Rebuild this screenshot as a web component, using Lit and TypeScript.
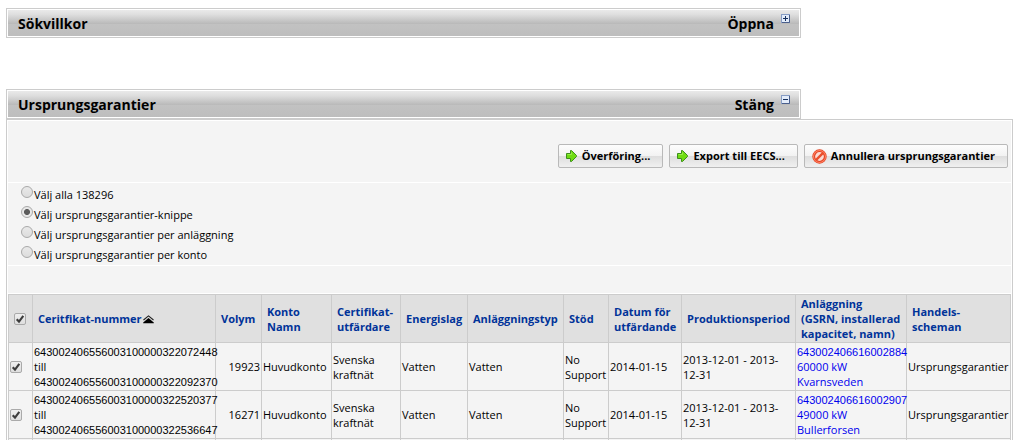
import { LitElement, html, css, svg, nothing } from "lit";
import { customElement, property } from "lit/decorators.js";

interface Guarantee {
  from: string;
  to: string;
  volume: number;
  gsrn: string;
  capacity: string;
  plant: string;
}

const guarantees: Guarantee[] = [
  {
    from: "643002406556003100000322072448",
    to: "643002406556003100000322092370",
    volume: 19923,
    gsrn: "643002406616002884",
    capacity: "60000 kW",
    plant: "Kvarnsveden",
  },
  {
    from: "643002406556003100000322520377",
    to: "643002406556003100000322536647",
    volume: 16271,
    gsrn: "643002406616002907",
    capacity: "49000 kW",
    plant: "Bullerforsen",
  },
];

const choices = [
  "Välj alla 138296",
  "Välj ursprungsgarantier-knippe",
  "Välj ursprungsgarantier per anläggning",
  "Välj ursprungsgarantier per konto",
];

const columns = [24, 183, 46, 70, 69, 67, 96, 45, 73, 114, 111, 104];

const arrowIcon = html`<svg width="12" height="14" viewBox="0 0 12 14" aria-hidden="true">
  <path d="M0.5 4.5H4.5V1.5H5.5L10.5 6.5V7.5L5.5 12.5H4.5V9.5H0.5Z" fill="#6fdc12" stroke="#3d8f1c" stroke-linejoin="round" />
  <path d="M1.5 5.5H5.5V3.5" fill="none" stroke="#98ee48" />
</svg>`;

const stopIcon = html`<svg width="15" height="15" viewBox="0 0 14 14" aria-hidden="true">
  <circle cx="7" cy="7" r="5.4" fill="#fbd9d2" stroke="#e2401f" stroke-width="2.6" />
  <circle cx="7" cy="7" r="5.6" fill="none" stroke="#ff8264" stroke-width="1" />
  <path d="M3.4 10.6L10.6 3.4" stroke="#ea4e2c" stroke-width="2.2" />
</svg>`;

const sortIcon = html`<svg class="sort" width="11" height="9" viewBox="0 0 11 9" aria-hidden="true">
  <path d="M0.5 5L5.5 0.9L10.5 5" fill="none" stroke="#222" stroke-width="1.1" />
  <path d="M5.5 3L10.8 7.4V8.2H0.2V7.4Z" fill="#000" />
</svg>`;

@customElement("section-bar")
export class SectionBar extends LitElement {
  static styles = css`
    :host {
      display: block;
      max-width: 795px;
    }
    .bar {
      box-sizing: border-box;
      display: flex;
      align-items: center;
      justify-content: space-between;
      height: 30px;
      padding: 2px 10px 0 11px;
      border: 1px solid #ccc;
      box-shadow: inset 0 0 0 1px #fff;
      background: linear-gradient(#ececec 0, #dedede 20%, #b9b9b9 53%, #c2c2c2 54%, #bdbdbd 100%);
    }
    .title,
    .toggle {
      margin: 0;
      font: bold 14px/20px "Open Sans", "Noto Sans", sans-serif;
      color: #000;
    }
    .toggle {
      display: flex;
      align-items: flex-start;
      gap: 7px;
      padding: 0;
      border: 0;
      background: none;
      cursor: pointer;
    }
  `;

  @property() heading = "";
  @property() action = "";
  @property({ type: Boolean }) open = false;

  render() {
    return html`<div class="bar">
      <h2 class="title">${this.heading}</h2>
      <button class="toggle" type="button" aria-expanded=${this.open}>
        ${this.action}
        <svg width="9" height="9" viewBox="0 0 9 9" aria-hidden="true">
          <rect x="0.5" y="0.5" width="8" height="8" fill="#e3ecfa" stroke="#869cc4" />
          <path d="M1 8.5H8.5V1" fill="none" stroke="#4a5f8c" />
          <path d="M2 4.5H7" stroke="#16305e" />
          ${this.open ? nothing : svg`<path d="M4.5 2V7" stroke="#16305e" />`}
        </svg>
      </button>
    </div>`;
  }
}

@customElement("app-root")
export class AppRoot extends LitElement {
  static styles = css`
    :host {
      box-sizing: border-box;
      display: block;
      height: 100vh;
      overflow: hidden;
      padding: 8px 4px 0 6px;
      background: #fff;
      color: #000;
      font: 11px/15px "Open Sans", "Noto Sans", sans-serif;
    }
    .results {
      margin-top: 51px;
    }
    .panel {
      display: flex;
      flex-direction: column;
      gap: 1px;
      padding: 1px;
      border: 1px solid #ccc;
      background: #fff;
    }
    .band {
      box-sizing: border-box;
      background: #f4f4f4;
    }
    .actions {
      display: flex;
      flex-wrap: wrap;
      justify-content: flex-end;
      gap: 6px;
      padding: 23px 3px 14px;
    }
    .action {
      display: flex;
      align-items: center;
      gap: 4px;
      height: 24px;
      padding: 0 12px 0 7px;
      border: 1px solid #b9b9b9;
      border-radius: 2px;
      background: linear-gradient(#fdfdfd 0, #f2f2f2 50%, #dedede 52%, #f0f0f0 100%);
      font: bold 11px/16px "Open Sans", "Noto Sans", sans-serif;
      color: #000;
      cursor: pointer;
    }
    .choices {
      margin: 0;
      padding: 2px 0 0 13px;
      border: 0;
      height: 82px;
    }
    .choice {
      display: flex;
      align-items: flex-start;
      gap: 1px;
      height: 20px;
      line-height: 20px;
      width: max-content;
    }
    .radio {
      appearance: none;
      box-sizing: border-box;
      width: 12px;
      height: 12px;
      margin: 1px 0 0;
      border: 1px solid #a9a9a9;
      border-radius: 50%;
      background: linear-gradient(#e9e9e9, #dcdcdc);
    }
    .radio:checked {
      background: radial-gradient(circle, #5c5c5c 0 2.6px, #e8e8e8 3.4px);
    }
    .spacer {
      height: 27px;
    }
    .table {
      width: 100%;
      table-layout: fixed;
      border-collapse: collapse;
      background: #f4f4f4;
    }
    .table th,
    .table td {
      height: 45px;
      padding: 1px;
      border: 1px solid #ccc;
      text-align: left;
      vertical-align: middle;
    }
    .table th {
      padding: 1px 5px;
      background: #e0e0e0;
      color: #003399;
      font-weight: bold;
      white-space: nowrap;
    }
    .table .volume {
      text-align: right;
    }
    .number {
      font-family: "Liberation Sans", Arial, sans-serif;
      line-height: 1;
    }
    .sort {
      margin-left: 1px;
      vertical-align: -1px;
    }
    .check {
      appearance: none;
      display: block;
      box-sizing: border-box;
      width: 12px;
      height: 12px;
      margin: 0;
      border: 1px solid #aaa;
      border-radius: 2px;
      background: linear-gradient(#efefef, #dedede);
    }
    .tick {
      display: grid;
      width: 12px;
    }
    .tick > * {
      grid-area: 1 / 1;
    }
    .tick svg {
      pointer-events: none;
    }
    .check:not(:checked) + svg {
      visibility: hidden;
    }
    .link {
      color: #0000ee;
      text-decoration: none;
    }
  `;

  private tick(label: string) {
    return html`<label class="tick">
      <input class="check" type="checkbox" checked aria-label=${label} />
      <svg width="12" height="12" viewBox="0 0 12 12" aria-hidden="true">
        <path d="M2.7 6.2L5 8.6L9.3 2.8" fill="none" stroke="#3c3c3c" stroke-width="2.1" />
      </svg>
    </label>`;
  }

  private number(value: string) {
    return html`<span class="number">${value}</span>`;
  }

  render() {
    return html`
      <section-bar heading="Sökvillkor" action="Öppna"></section-bar>
      <section-bar class="results" heading="Ursprungsgarantier" action="Stäng" open></section-bar>
      <main class="panel">
        <div class="band actions">
          <button class="action" type="button">${arrowIcon}Överföring...</button>
          <button class="action" type="button">${arrowIcon}Export till EECS...</button>
          <button class="action" type="button">${stopIcon}Annullera ursprungsgarantier</button>
        </div>
        <fieldset class="band choices">
          ${choices.map(
            (text, i) => html`<label class="choice">
              <input class="radio" type="radio" name="scope" ?checked=${i === 1} />${text}
            </label>`,
          )}
        </fieldset>
        <div class="band spacer"></div>
        <table class="table">
          <colgroup>
            ${columns.map((w) => html`<col width=${w} />`)}
          </colgroup>
          <thead>
            <tr>
              <th>${this.tick("Alla")}</th>
              <th>Ceritfikat-nummer${sortIcon}</th>
              <th>Volym</th>
              <th>Konto<br />Namn</th>
              <th>Certifikat-<br />utfärdare</th>
              <th>Energislag</th>
              <th>Anläggningstyp</th>
              <th>Stöd</th>
              <th>Datum för<br />utfärdande</th>
              <th>Produktionsperiod</th>
              <th>Anläggning<br />(GSRN, installerad<br />kapacitet, namn)</th>
              <th>Handels-<br />scheman</th>
            </tr>
          </thead>
          <tbody>
            ${guarantees.map(
              (g) => html`<tr>
                <td>${this.tick(g.from)}</td>
                <td>${this.number(g.from)}<br />till<br />${this.number(g.to)}</td>
                <td class="volume">${g.volume}</td>
                <td>Huvudkonto</td>
                <td>Svenska<br />kraftnät</td>
                <td>Vatten</td>
                <td>Vatten</td>
                <td>No<br />Support</td>
                <td>2014-01-15</td>
                <td>2013-12-01 - 2013-<br />12-31</td>
                <td>
                  <a class="link" href="#${g.gsrn}">${this.number(g.gsrn)}<br />${g.capacity}<br />${g.plant}</a>
                </td>
                <td>Ursprungsgarantier</td>
              </tr>`,
            )}
            <tr>
              ${columns.map(() => html`<td></td>`)}
            </tr>
          </tbody>
        </table>
      </main>
    `;
  }
}
